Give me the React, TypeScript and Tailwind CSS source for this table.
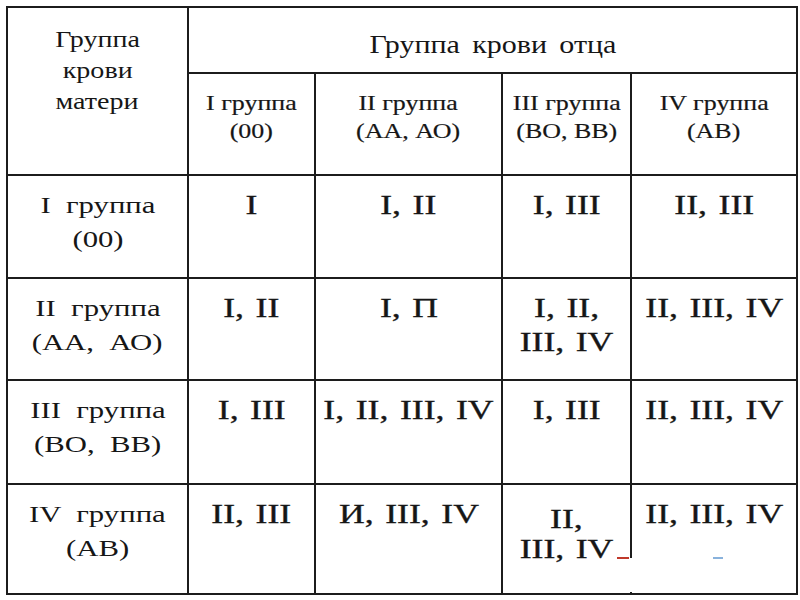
import React from "react";

const base = "bg-white text-center text-[#161616]";
const head = `${base} text-[22px] leading-[28px] pt-[15px] [-webkit-text-stroke:0.2px_#161616]`;
const label = `${base} text-[24px] leading-[34px] pt-[12px] [word-spacing:6px]`;
const data = `${base} text-[27px] leading-[34px] pt-[12px] [-webkit-text-stroke:0.35px_#161616] [word-spacing:2px]`;

function Lines({ items, sx = "scale-x-125" }: { items: string[]; sx?: string }) {
  return (
    <>
      {items.map((t, j) => (
        <div key={j}>
          <span className={`inline-block whitespace-pre ${sx}`}>{t}</span>
        </div>
      ))}
    </>
  );
}

export default function App() {
  const rows: string[][][] = [
    [["I группа", "(00)"], ["I"], ["I, II"], ["I, III"], ["II, III"]],
    [["II группа", "(АА, АО)"], ["I, II"], ["I, П"], ["I, II,", "III, IV"], ["II, III, IV"]],
    [["III группа", "(ВО, ВВ)"], ["I, III"], ["I, II, III, IV"], ["I, III"], ["II, III, IV"]],
    [["IV группа", "(АВ)"], ["II, III"], ["И, III, IV"], ["II,", "III, IV"], ["II, III, IV"]],
  ];
  return (
    <div className="w-[800px] h-[600px] bg-white relative font-['Liberation_Serif',serif] pl-[6px] pt-[6px]">
      <div className="grid grid-cols-[179px_125px_185px_127px_164px] grid-rows-[64px_100px_101px_100px_102px_108px] gap-[2px] bg-[#1c1c1c] p-[2px] w-[792px]">
        <div className={`${base} row-span-2 text-[23px] leading-[31px] pt-[16px]`}>
          <Lines items={["Группа", "крови", "матери"]} sx="scale-x-[1.22]" />
        </div>
        <div className={`${base} col-span-4 text-[25px] leading-[31px] pt-[21px] [word-spacing:4px]`}>
          <Lines items={["Группа крови отца"]} sx="scale-x-[1.2]" />
        </div>
        <div className={head}><Lines items={["I группа", "(00)"]} sx="scale-x-[1.18]" /></div>
        <div className={head}><Lines items={["II группа", "(АА, АО)"]} sx="scale-x-[1.18]" /></div>
        <div className={head}><Lines items={["III группа", "(ВО, ВВ)"]} sx="scale-x-[1.18]" /></div>
        <div className={head}><Lines items={["IV группа", "(АВ)"]} sx="scale-x-[1.18]" /></div>
        {rows.map((r, i) => (
          <React.Fragment key={i}>
            <div className={label}>
              <Lines items={r[0]} sx="scale-x-[1.28]" />
            </div>
            {r.slice(1).map((c, k) => {
              const special = i === 3 && k === 2;
              return (
                <div
                  key={k}
                  className={
                    special
                      ? `${base} text-[27px] leading-[30px] pt-[19px] [-webkit-text-stroke:0.35px_#161616] [word-spacing:2px]`
                      : data
                  }
                >
                  <Lines items={c} sx="scale-x-[1.32]" />
                </div>
              );
            })}
          </React.Fragment>
        ))}
      </div>
      <div className="absolute z-10 left-[624px] top-[558px] w-[166px] h-[34px] bg-white" />
      <div className="absolute z-20 left-[617px] top-[557px] w-[12px] h-[2px] bg-[#c0392b]" />
      <div className="absolute z-20 left-[713px] top-[557px] w-[10px] h-[2px] bg-[#3b7fc4] opacity-60" />
    </div>
  );
}
